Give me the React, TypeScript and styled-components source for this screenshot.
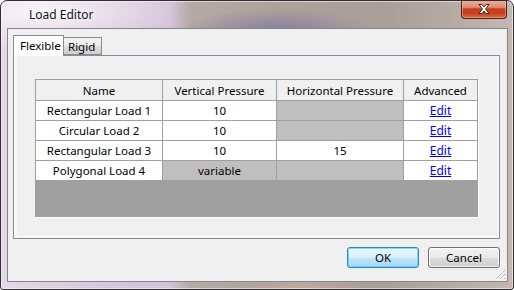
import React from 'react'
import styled, { createGlobalStyle } from 'styled-components'

const GlobalStyle = createGlobalStyle`
  html, body {
    margin: 0;
    padding: 0;
    background: #fff;
  }
  #root {
    width: 514px;
    height: 290px;
  }
`

const uiFont = `"Noto Sans", "Open Sans", "Liberation Sans", sans-serif`

const Window = styled.div`
  position: relative;
  box-sizing: border-box;
  width: 514px;
  height: 290px;
  display: flex;
  flex-direction: column;
  padding: 0 5px 7px 6px;
  border: 1px solid #2f2f33;
  border-radius: 7px 7px 3px 3px;
  box-shadow: inset 0 0 0 1px rgba(255, 255, 255, 0.55);
  background:
    radial-gradient(ellipse 95px 22px at 275px 30px, rgba(130, 122, 160, 0.9), rgba(130, 122, 160, 0) 100%),
    radial-gradient(ellipse 140px 40px at 40px 10px, rgba(250, 246, 250, 0.95), rgba(250, 246, 250, 0) 100%),
    radial-gradient(ellipse 60px 30px at 300px 290px, rgba(200, 170, 160, 0.8), rgba(200, 170, 160, 0) 100%),
    linear-gradient(90deg, #e4d8e6 0%, #d9c8dc 18%, #d4c3d8 33%, #b6aaa6 37%, #ada19b 55%, #aa9e98 75%, #b8aca6 90%, #c4b8b2 100%);
  font-family: ${uiFont};
  overflow: hidden;
`

const TitleBar = styled.div`
  height: 27px;
  display: flex;
  align-items: center;
  padding-left: 22px;
`

const Title = styled.div`
  font-size: 12px;
  color: #111;
  padding-bottom: 1px;
  text-shadow: 0 0 6px rgba(255, 255, 255, 0.9), 0 0 3px rgba(255, 255, 255, 0.9);
`

const CloseButton = styled.div`
  margin-left: auto;
  margin-right: 1px;
  align-self: flex-start;
  box-sizing: border-box;
  width: 46px;
  height: 19px;
  margin-top: -1px;
  display: flex;
  align-items: center;
  justify-content: center;
  border: 1px solid #4a2018;
  border-top: none;
  border-radius: 0 0 4px 4px;
  background: linear-gradient(180deg, #eab3a4 0%, #df8c74 40%, #c83c1c 50%, #c64222 75%, #dd6a40 100%);
  box-shadow: inset 0 0 0 1px rgba(255, 200, 180, 0.45);
`

const Client = styled.div`
  position: relative;
  flex: 1;
  display: flex;
  flex-direction: column;
  border: 1px solid #85858c;
  background: #f0f0f0;
  padding: 6px 7px 0 5px;
`

const TabStrip = styled.div`
  display: flex;
  align-items: flex-end;
  height: 20px;
  position: relative;
  z-index: 1;
`

const Tab = styled.div<{ $active?: boolean }>`
  box-sizing: border-box;
  height: ${p => (p.$active ? '21px' : '18px')};
  width: ${p => (p.$active ? '51px' : '38px')};
  margin-bottom: ${p => (p.$active ? '-1px' : '0')};
  padding: ${p => (p.$active ? '2px 0 0 6px' : '0 0 0 4px')};
  display: flex;
  align-items: ${p => (p.$active ? 'flex-start' : 'center')};
  font-size: 11.5px;
  color: #000;
  border: 1px solid #898c95;
  border-bottom: ${p => (p.$active ? 'none' : '1px solid #898c95')};
  border-left: ${p => (p.$active ? '1px solid #898c95' : 'none')};
  background: ${p =>
    p.$active
      ? '#ffffff'
      : 'linear-gradient(180deg, #f2f2f2 0%, #ebebeb 50%, #dddddd 51%, #cfcfcf 100%)'};
`

const Panel = styled.div`
  box-sizing: border-box;
  height: 184px;
  border: 1px solid #898c95;
  background: #f0f0f0;
  box-shadow: inset 3px 0 0 #fafafa, inset 0 -1px 0 #f0f0f0, inset 0 -2px 0 #ffffff, inset -2px 0 0 #fafafa;
  padding: 23px 0 0 21px;
`

const Grid = styled.div`
  box-sizing: border-box;
  width: 443px;
  height: 138px;
  border: 1px solid #a0a0a0;
  background: #a0a0a0;
  box-shadow: 1px 1px 0 #ffffff;
  display: grid;
  grid-template-columns: 126px 113px 126px 73px;
  grid-template-rows: 20px;
  grid-auto-rows: 19px;
  gap: 1px;
  align-content: start;
`

const Cell = styled.div<{ $kind?: 'header' | 'disabled' | 'normal' }>`
  display: flex;
  align-items: center;
  justify-content: center;
  font-size: 11.5px;
  color: #000;
  white-space: nowrap;
  background: ${p =>
    p.$kind === 'header' ? '#f0f0f0' : p.$kind === 'disabled' ? '#bfbfbf' : '#ffffff'};
`

const EditLink = styled.a`
  color: #0000ff;
  text-decoration: underline;
  font-size: 12px;
  cursor: pointer;
`

const ButtonRow = styled.div`
  display: flex;
  justify-content: flex-end;
  gap: 9px;
  margin-top: 8px;
`

const Button = styled.button<{ $default?: boolean }>`
  box-sizing: border-box;
  width: 72px;
  height: 21px;
  padding: 0;
  font-family: ${uiFont};
  font-size: 11.5px;
  color: #000;
  border-radius: 3px;
  border: 1px solid ${p => (p.$default ? '#3c7fb1' : '#707070')};
  background: ${p =>
    p.$default
      ? 'linear-gradient(180deg, #eaf6fd 0%, #d9f0fc 50%, #bee6fd 51%, #a7d9f5 100%)'
      : 'linear-gradient(180deg, #f2f2f2 0%, #ebebeb 50%, #dddddd 51%, #cfcfcf 100%)'};
  box-shadow: inset 0 0 0 1px ${p => (p.$default ? 'rgba(72, 215, 251, 0.7)' : 'rgba(255, 255, 255, 0.7)')};
`

const Grip = styled.svg`
  position: absolute;
  right: 1px;
  bottom: 1px;
`

type Row = {
  name: string
  vertical?: string
  horizontal?: string
}

const rows: Row[] = [
  { name: 'Rectangular Load 1', vertical: '10' },
  { name: 'Circular Load 2', vertical: '10' },
  { name: 'Rectangular Load 3', vertical: '10', horizontal: '15' },
  { name: 'Polygonal Load 4' },
]

export default function App() {
  return (
    <>
      <GlobalStyle />
      <Window>
        <TitleBar>
          <Title>Load Editor</Title>
          <CloseButton>
            <svg width="14" height="12" viewBox="0 0 14 12">
              <path
                d="M2 1.5 L5 1.5 L7 4 L9 1.5 L12 1.5 L8.6 6 L12 10.5 L9 10.5 L7 8 L5 10.5 L2 10.5 L5.4 6 Z"
                fill="#ffffff"
                stroke="#3c2a2a"
                strokeWidth="1"
                strokeLinejoin="round"
              />
            </svg>
          </CloseButton>
        </TitleBar>
        <Client>
          <TabStrip>
            <Tab $active>Flexible</Tab>
            <Tab>Rigid</Tab>
          </TabStrip>
          <Panel>
            <Grid>
              <Cell $kind="header">Name</Cell>
              <Cell $kind="header">Vertical Pressure</Cell>
              <Cell $kind="header">Horizontal Pressure</Cell>
              <Cell $kind="header">Advanced</Cell>
              {rows.map(r => (
                <React.Fragment key={r.name}>
                  <Cell>{r.name}</Cell>
                  <Cell $kind={r.vertical ? 'normal' : 'disabled'}>
                    {r.vertical ?? 'variable'}
                  </Cell>
                  <Cell $kind={r.horizontal ? 'normal' : 'disabled'}>
                    {r.horizontal}
                  </Cell>
                  <Cell>
                    <EditLink>Edit</EditLink>
                  </Cell>
                </React.Fragment>
              ))}
            </Grid>
          </Panel>
          <ButtonRow>
            <Button $default>OK</Button>
            <Button>Cancel</Button>
          </ButtonRow>
          <Grip width="12" height="12" viewBox="0 0 12 12">
            <g stroke="#9a9a9a" strokeWidth="1" strokeDasharray="1 1">
              <line x1="11" y1="2" x2="2" y2="11" />
              <line x1="11" y1="6" x2="6" y2="11" />
              <line x1="11" y1="10" x2="10" y2="11" />
            </g>
          </Grip>
        </Client>
      </Window>
    </>
  )
}
